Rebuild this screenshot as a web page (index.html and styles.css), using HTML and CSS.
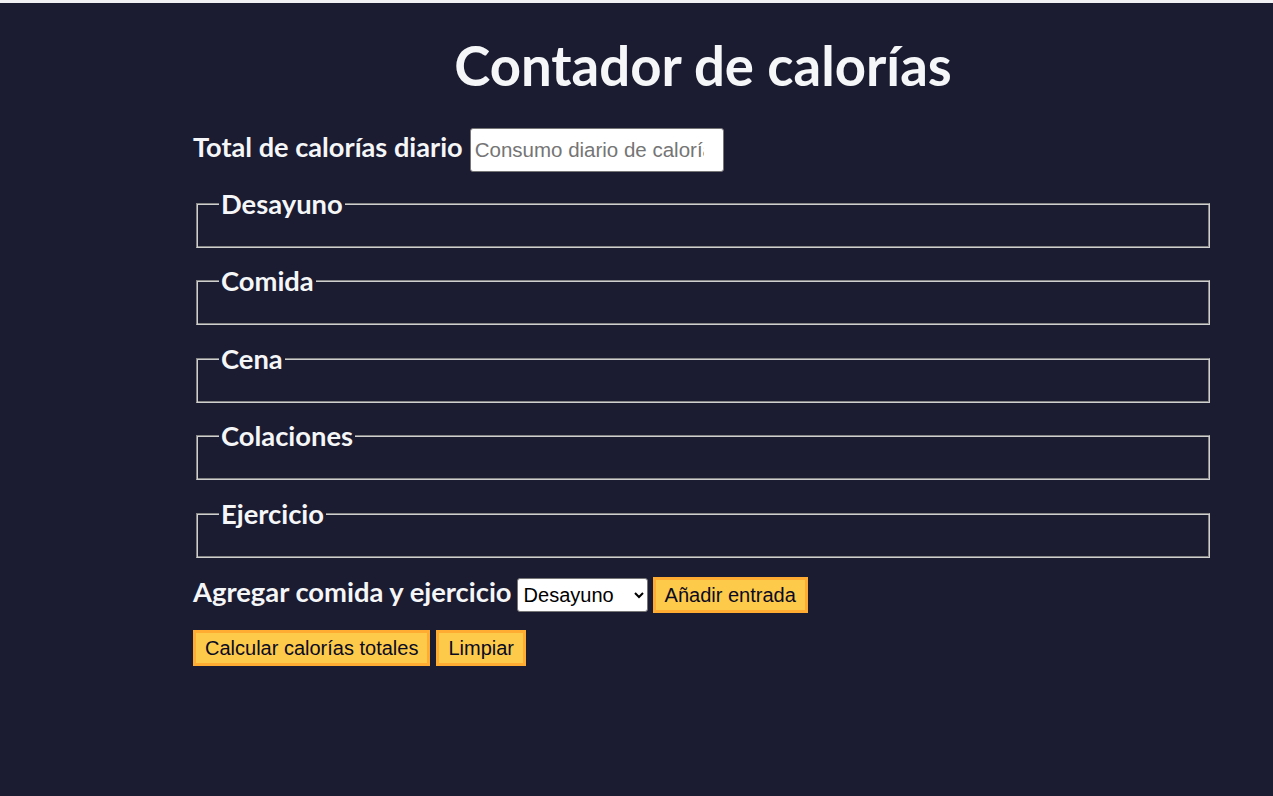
FILE: index.html
```html
<!DOCTYPE html>
<html lang="es">
<head>
<meta charset="utf-8">
<title>Contador de calorías</title>
<link rel="stylesheet" href="styles.css">
</head>
<body>
<main class="container">
  <h1 class="title">Contador de calorías</h1>
  <form class="form">
    <div class="row budget-row">
      <label class="label" for="budget">Total de calorías diario</label>
      <input class="text-input" id="budget" type="number" placeholder="Consumo diario de calorías">
    </div>
    <fieldset class="meal"><legend class="legend">Desayuno</legend></fieldset>
    <fieldset class="meal"><legend class="legend">Comida</legend></fieldset>
    <fieldset class="meal"><legend class="legend">Cena</legend></fieldset>
    <fieldset class="meal"><legend class="legend">Colaciones</legend></fieldset>
    <fieldset class="meal"><legend class="legend">Ejercicio</legend></fieldset>
    <div class="row add-row">
      <label class="label" for="entry">Agregar comida y ejercicio</label>
      <select class="select" id="entry">
        <option>Desayuno</option>
        <option>Comida</option>
        <option>Cena</option>
        <option>Colaciones</option>
        <option>Ejercicio</option>
      </select>
      <button type="button" class="btn">Añadir entrada</button>
    </div>
    <div class="row btn-row">
      <button type="submit" class="btn">Calcular calorías totales</button>
      <button type="button" class="btn">Limpiar</button>
    </div>
  </form>
</main>
</body>
</html>
```

FILE: styles.css
```css
html, body {
  margin: 0;
  padding: 0;
}
body {
  background: #1b1b32;
  color: #f5f6f7;
  font-family: Lato, "Liberation Sans", Arial, sans-serif;
  border-top: 3px solid #f1f1f3;
  min-height: 793px;
}
.container {
  margin-left: 193px;
  width: 1020px;
}
.title {
  text-align: center;
  font-size: 54.5px;
  font-weight: 700;
  margin: 0;
  padding-top: 29px;
  line-height: 66px;
}
.form {
  margin-top: 30px;
}
.row {
  display: flex;
  align-items: baseline;
  gap: 5px;
}
.label {
  font-size: 27.2px;
  font-weight: 700;
}
.text-input {
  width: 254px;
  height: 44px;
  box-sizing: border-box;
  border: 1px solid #767676;
  border-radius: 3px;
  font-family: "Liberation Sans", Arial, sans-serif;
  font-size: 20.5px;
  padding: 0 4px;
  background: #fff;
  margin-left: 2px;
}
.text-input::placeholder {
  color: #757575;
}
.meal {
  margin: 16.4px 3px 0 3px;
  padding: 9px 22px 18px;
  border: 1px solid;
  border-color: #858585 #cfcfcf #cfcfcf #858585;
  box-shadow: inset 1px 1px 0 #cfcfcf, inset -1px -1px 0 #858585;
  min-width: 0;
}
.budget-row + .meal {
  margin-top: 15px;
}
.legend {
  font-size: 27.35px;
  font-weight: 700;
  padding: 0 2px;
  background: #1b1b32;
}
.add-row {
  margin-top: 17px;
}
.add-row .label {
  font-size: 27.35px;
}
.select {
  height: 34px;
  width: 131px;
  font-family: "Liberation Sans", Arial, sans-serif;
  font-size: 20px;
  border: 1px solid #767676;
  border-radius: 3px;
  background: #fff;
  color: #000;
  padding: 0 2px;
}
.btn {
  font-family: "Liberation Sans", Arial, sans-serif;
  font-size: 20px;
  background: #feca49;
  border: 3px solid #feac32;
  color: #0a0a23;
  padding: 0 9px;
  height: 36px;
  cursor: pointer;
}
.btn-row {
  margin-top: 17px;
  gap: 6px;
}
```
